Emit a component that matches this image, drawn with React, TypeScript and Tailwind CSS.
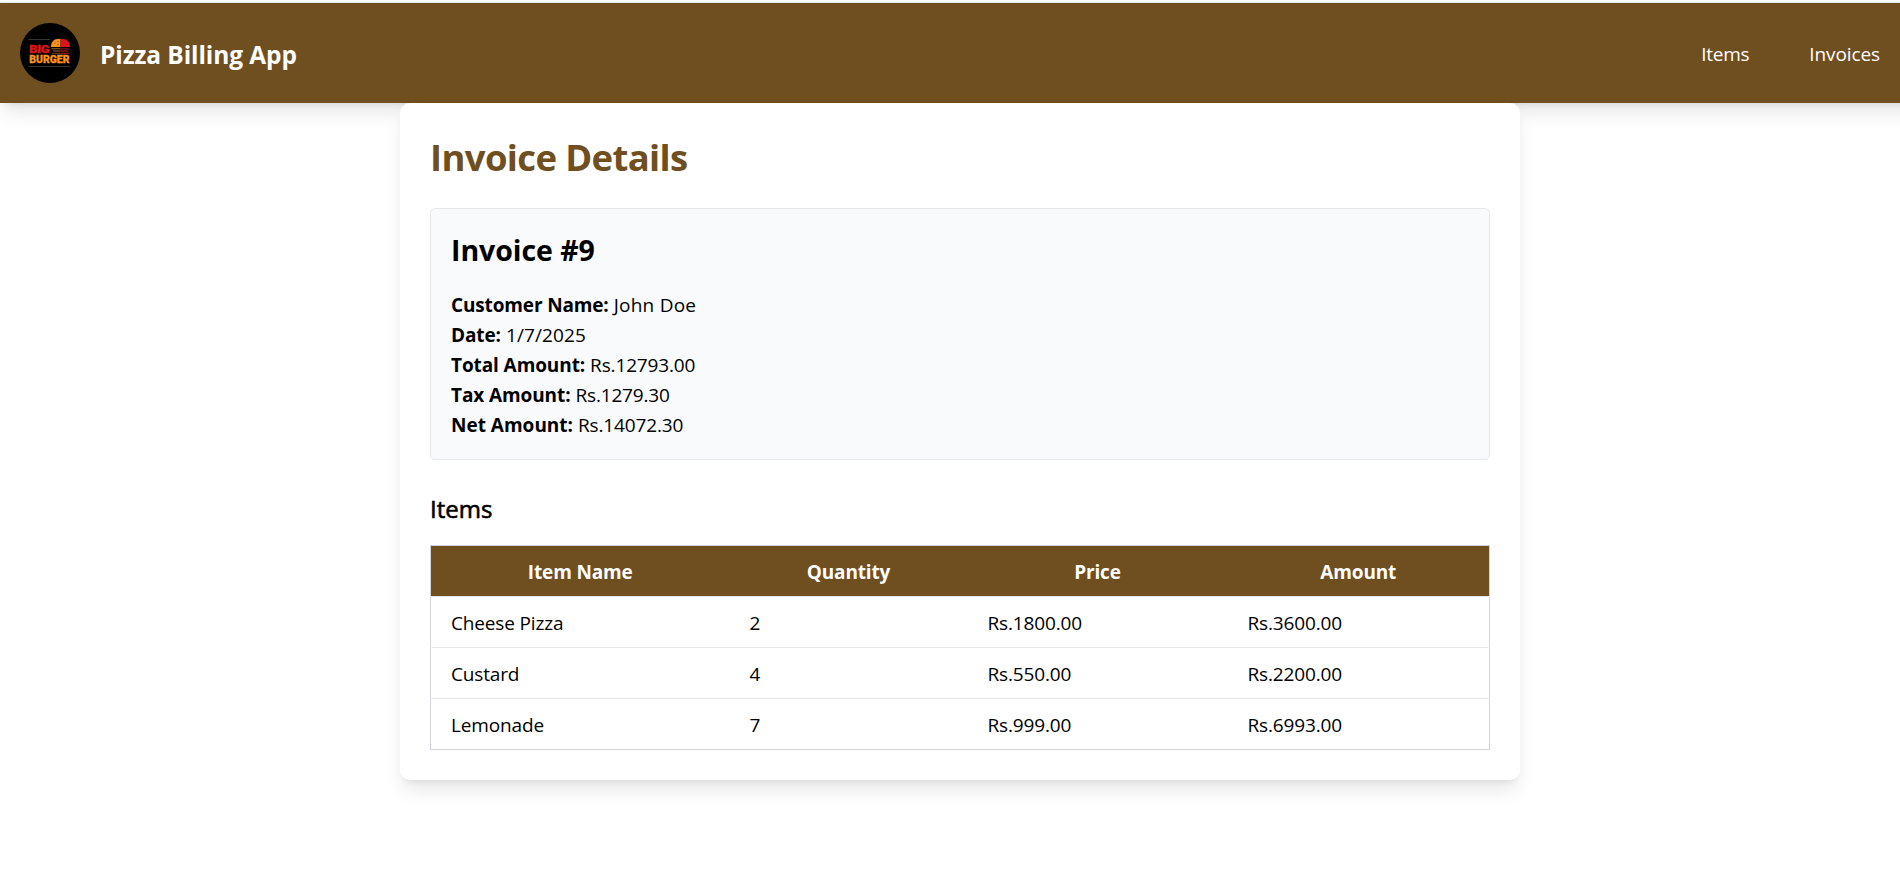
const details = [
  { label: 'Customer Name:', value: 'John Doe', lt: 'tracking-[-0.15px]', vt: 'tracking-[0.25px]' },
  { label: 'Date:', value: '1/7/2025', lt: 'tracking-[-0.1px]', vt: 'tracking-[0.1px]' },
  { label: 'Total Amount:', value: 'Rs.12793.00', lt: 'tracking-[-0.1px]', vt: 'tracking-[-0.15px]' },
  { label: 'Tax Amount:', value: 'Rs.1279.30', lt: 'tracking-[-0.1px]', vt: 'tracking-[-0.17px]' },
  { label: 'Net Amount:', value: 'Rs.14072.30', lt: 'tracking-[0px]', vt: 'tracking-[-0.15px]' },
];

const items = [
  { name: 'Cheese Pizza', quantity: 2, price: 'Rs.1800.00', amount: 'Rs.3600.00' },
  { name: 'Custard', quantity: 4, price: 'Rs.550.00', amount: 'Rs.2200.00' },
  { name: 'Lemonade', quantity: 7, price: 'Rs.999.00', amount: 'Rs.6993.00' },
];

function Logo() {
  return (
    <svg viewBox="0 0 60 60" className="size-[60px] shrink-0">
      <circle cx="30" cy="30" r="30" fill="#000" />
      <path d="M8.5 16.5H30M8.5 43.5H50.5" stroke="#4a4a4a" strokeWidth="0.7" />
      <path d="M31 24C31 19 33.5 16 38 16H40.5V24Z" fill="#f7941d" />
      <path d="M40.5 16H43C47.5 16 50 19 50 24H40.5Z" fill="#d8171d" />
      <path d="M31.5 25.8H40.5M33 28H40.5" stroke="#a8641a" strokeWidth="1.1" />
      <path d="M40.5 25.8H49.5M40.5 28H48" stroke="#8e1418" strokeWidth="1.3" />
      <path d="M32 30.3H40.5" stroke="#6e4312" strokeWidth="1" />
      <path d="M40.5 30.3H49.5" stroke="#a5161b" strokeWidth="1.2" />
      <path d="M34.5 20h1M37.5 18.5h1M37.5 21.5h1" stroke="#7c4507" strokeWidth="1" />
      <text x="9.2" y="30" fontFamily="Roboto, sans-serif" fontWeight="900" fontSize="11.8" textLength="20.3" lengthAdjust="spacingAndGlyphs" fill="#d8171d" stroke="#d8171d" strokeWidth="0.5">BIG</text>
      <text x="9.2" y="40.3" fontFamily="Roboto, sans-serif" fontWeight="900" fontSize="11.6" textLength="40.3" lengthAdjust="spacingAndGlyphs" fill="#f7941d" stroke="#f7941d" strokeWidth="0.3">BURGER</text>
    </svg>
  );
}

function Header() {
  return (
    <header className="flex h-[100px] w-[1930px] items-center justify-between bg-[#6f4e20] pr-[50px] pl-5 text-white shadow-[0_12.5px_18.75px_-3.75px_rgba(0,0,0,0.1),0_5px_7.5px_-5px_rgba(0,0,0,0.1)]">
      <div className="flex items-center gap-5">
        <Logo />
        <span className="pt-0.5 text-[24.5px] leading-[35px] font-bold tracking-[-0.1px]">Pizza Billing App</span>
      </div>
      <nav className="flex gap-[60px] pt-0.5 text-[19px] leading-[30px]">
        <a className="tracking-[-0.25px]">Items</a>
        <a className="tracking-[-0.1px]">Invoices</a>
      </nav>
    </header>
  );
}

export default function App() {
  return (
    <div className="h-[885px] overflow-hidden bg-white pt-0.5 font-['Open_Sans',sans-serif] text-black">
      <div className="h-px bg-[#e5e7eb]" />
      <Header />
      <main className="ml-[400px] w-[1120px] rounded-[10px] bg-white p-[30px] shadow-[0_12.5px_18.75px_-3.75px_rgba(0,0,0,0.1),0_5px_7.5px_-5px_rgba(0,0,0,0.1)]">
        <h1 className="mb-7 pt-0.5 text-[36.5px] leading-[45px] font-bold tracking-[-0.65px] text-[#6f4e20]">Invoice Details</h1>
        <section className="mb-[30px] rounded-[5px] border border-[#e5e7eb] bg-[#f9fafb] px-5 pt-[21px] pb-[19px]">
          <h2 className="mb-5 text-[28.5px] leading-10 font-bold tracking-[-0.05px]">Invoice #9</h2>
          {details.map((d) => (
            <p key={d.label} className="flex gap-[5px] text-[19px] leading-[30px]">
              <strong className={d.lt}>{d.label}</strong>
              <span className={d.vt}>{d.value}</span>
            </p>
          ))}
        </section>
        <h3 className="mb-[19px] pt-px text-[24px] leading-[35px] font-medium [-webkit-text-stroke:0.6px_black]">Items</h3>
        <table className="w-full table-fixed border-collapse border border-[#d1d5db] text-[19px] leading-[30px]">
          <colgroup>
            <col className="w-[299px]" />
            <col className="w-[238px]" />
            <col className="w-[260px]" />
            <col />
          </colgroup>
          <thead className="bg-[#6f4e20] tracking-[-0.15px] text-white">
            <tr>
              <th className="px-5 pt-[11px] pb-[9px]">Item Name</th>
              <th className="px-5 pt-[11px] pb-[9px]">Quantity</th>
              <th className="px-5 pt-[11px] pb-[9px]">Price</th>
              <th className="px-5 pt-[11px] pb-[9px]">Amount</th>
            </tr>
          </thead>
          <tbody className="tracking-[-0.15px]">
            {items.map((item) => (
              <tr key={item.name} className="border-t border-[#e5e7eb]">
                <td className="px-5 pt-[11px] pb-[9px]">{item.name}</td>
                <td className="px-5 pt-[11px] pb-[9px]">{item.quantity}</td>
                <td className="px-5 pt-[11px] pb-[9px]">{item.price}</td>
                <td className="px-5 pt-[11px] pb-[9px]">{item.amount}</td>
              </tr>
            ))}
          </tbody>
        </table>
      </main>
    </div>
  );
}
